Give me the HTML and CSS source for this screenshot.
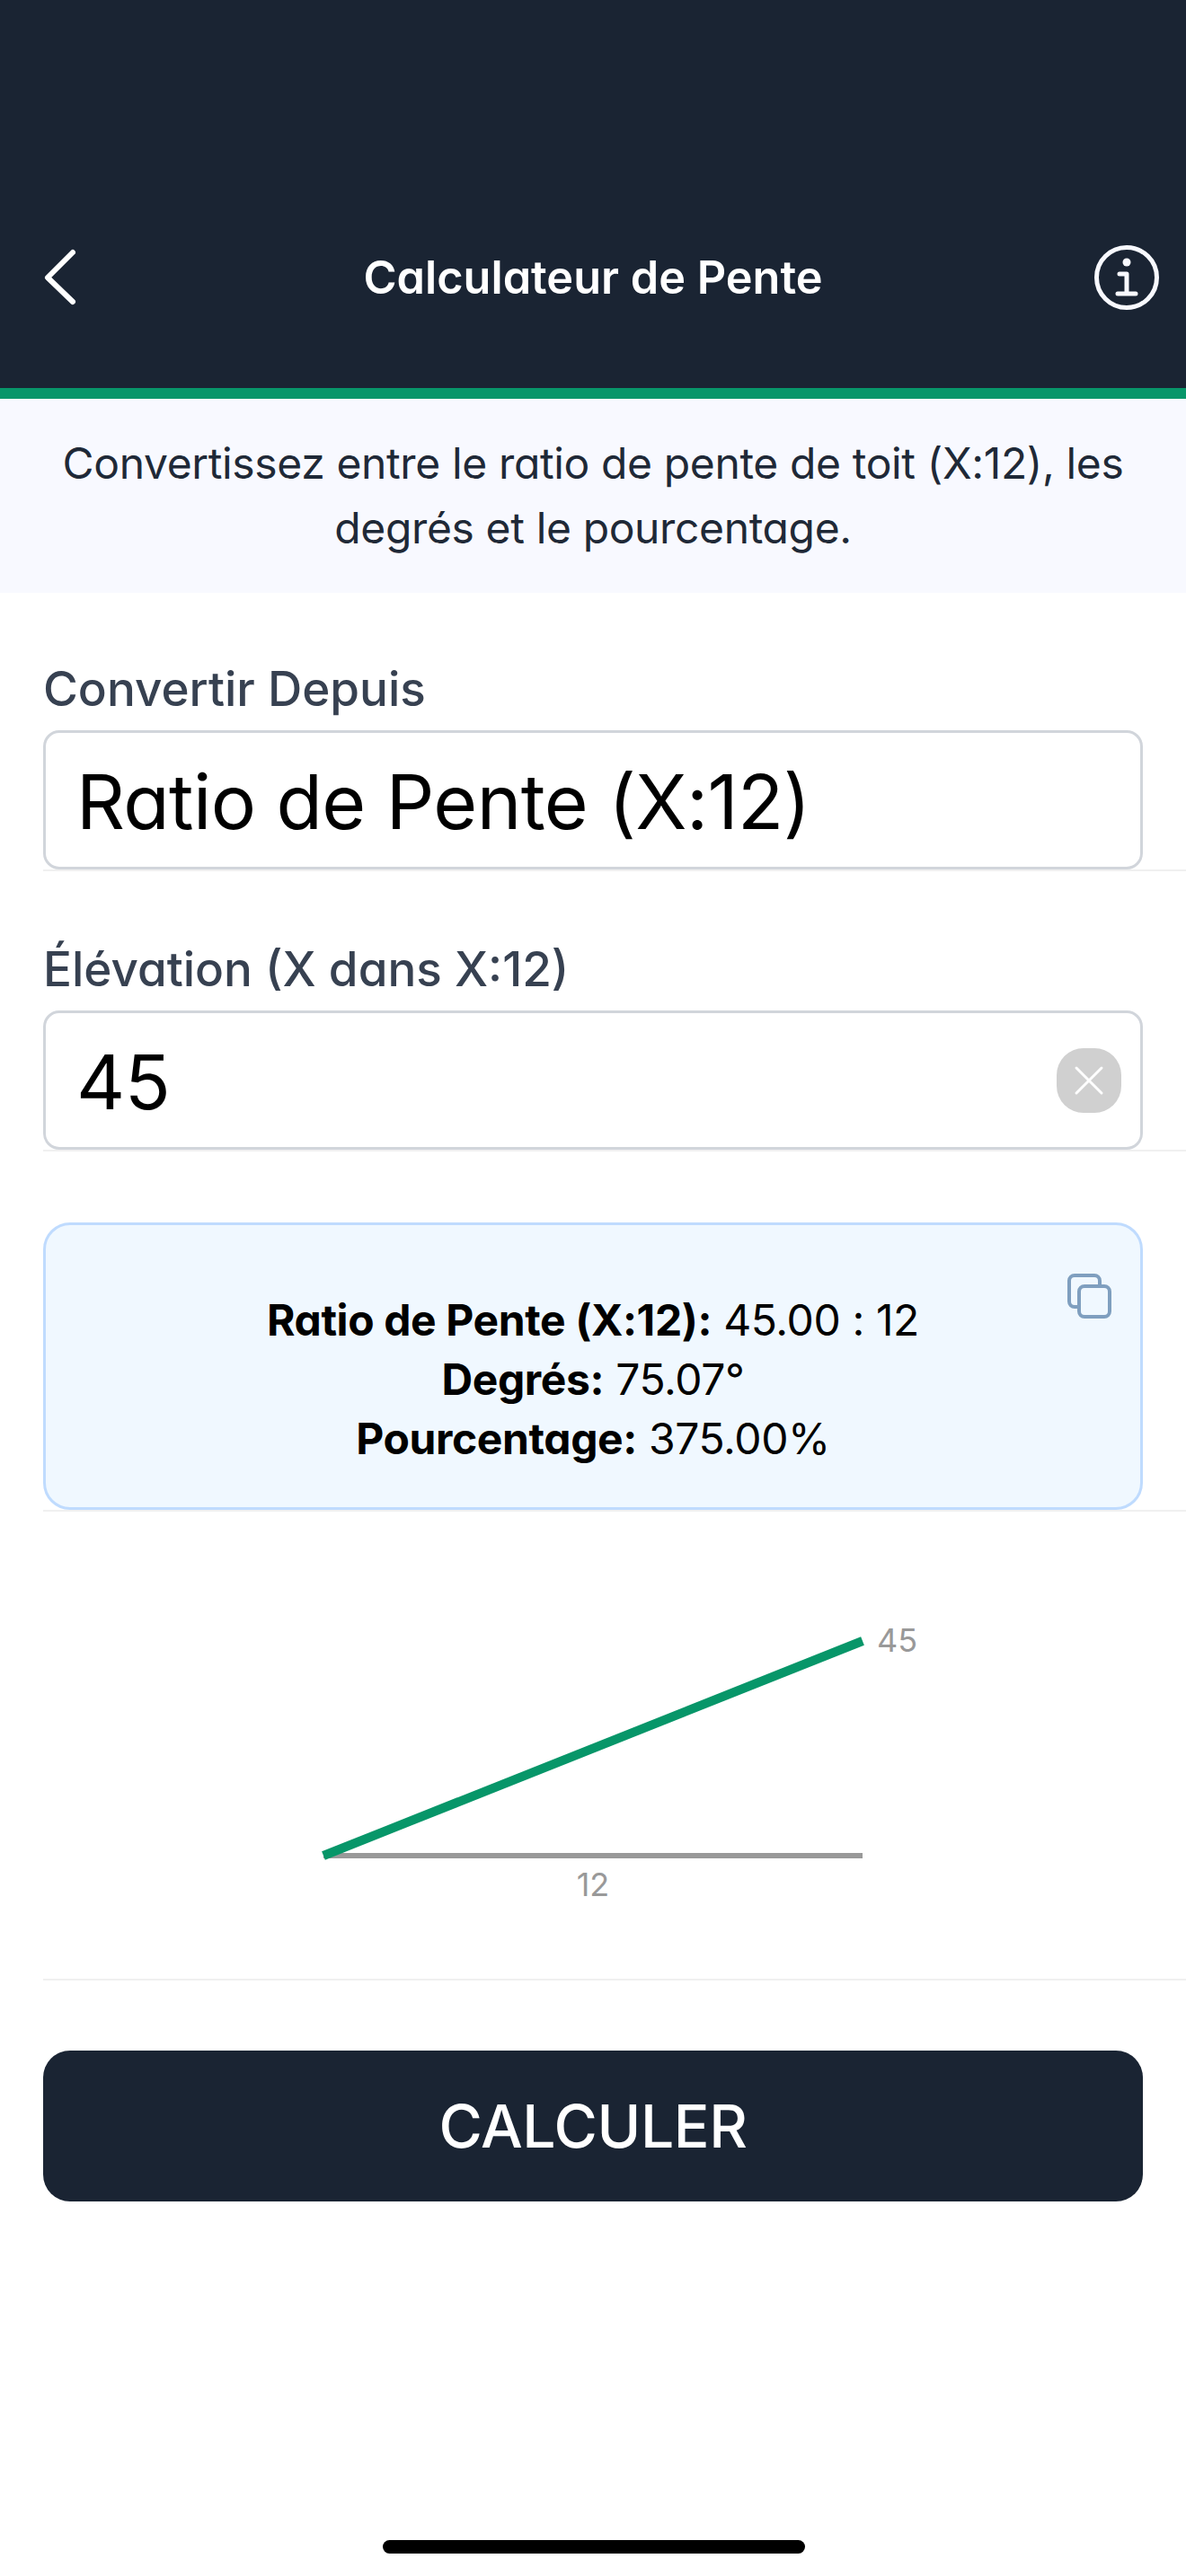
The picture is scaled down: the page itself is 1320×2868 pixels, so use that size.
FILE: index.html
```html
<!DOCTYPE html>
<html lang="fr">
<head>
<meta charset="utf-8">
<title>Calculateur de Pente</title>
<link rel="stylesheet" href="styles.css">
</head>
<body>
<div class="screen">
  <header class="header">
    <svg class="icon-back" viewBox="0 0 48 72" width="48" height="72"><path d="M38 8 L10 36 L38 63" fill="none" stroke="#fff" stroke-width="6" stroke-linecap="round" stroke-linejoin="round"/></svg>
    <h1 class="title">Calculateur de Pente</h1>
    <svg class="icon-info" viewBox="0 0 72 72" width="72" height="72">
      <circle cx="36" cy="36" r="33.5" fill="none" stroke="#f8f9ff" stroke-width="5"/>
      <circle cx="36" cy="19" r="4.5" fill="#f8f9ff"/>
      <path d="M28 32 H36 V54 M26 54 H46" fill="none" stroke="#f8f9ff" stroke-width="5" stroke-linecap="round" stroke-linejoin="round"/>
    </svg>
  </header>
  <p class="intro">Convertissez entre le ratio de pente de toit (X:12), les degrés et le pourcentage.</p>
  <section class="field field-first">
    <div class="label">Convertir Depuis</div>
    <div class="input"><span class="value">Ratio de Pente (X:12)</span></div>
  </section>
  <section class="field">
    <div class="label">Élévation (X dans X:12)</div>
    <div class="input">
      <span class="value">45</span>
      <span class="clear"><svg viewBox="0 0 36 36" width="36" height="36"><path d="M4 4 L32 32 M32 4 L4 32" stroke="#fff" stroke-width="3" stroke-linecap="round"/></svg></span>
    </div>
  </section>
  <section class="field field-result">
    <div class="result">
      <svg class="copy" viewBox="0 0 50 50" width="50" height="50">
        <path d="M12 37 H9 A6 6 0 0 1 3 31 V8 A6 6 0 0 1 9 2 H31 A6 6 0 0 1 37 8 V13" fill="none" stroke="#7f9fbf" stroke-width="4"/>
        <rect x="14" y="14" width="34" height="34" rx="6" fill="none" stroke="#7f9fbf" stroke-width="4"/>
      </svg>
      <div><b>Ratio de Pente (X:12):</b> 45.00 : 12</div>
      <div><b>Degrés:</b> 75.07°</div>
      <div><b>Pourcentage:</b> 375.00%</div>
    </div>
  </section>
  <section class="field field-chart">
    <svg class="chart-svg" viewBox="0 0 1272 340" width="1272" height="340">
      <line x1="312" y1="277" x2="912" y2="277" stroke="#999" stroke-width="6"/>
      <line x1="312" y1="277" x2="912" y2="38" stroke="#079669" stroke-width="10"/>
      <text class="chart-label" x="928" y="50">45</text>
      <text class="chart-label" x="612" y="322" text-anchor="middle">12</text>
    </svg>
  </section>
  <button class="calc">CALCULER</button>
  <div class="home"></div>
</div>
</body>
</html>
```
FILE: styles.css
```css
* { box-sizing: border-box; }
html, body { margin: 0; padding: 0; background: #fff; }
body { font-family: Inter, "Liberation Sans", sans-serif; font-feature-settings: "cv11" 1; }
.screen { width: 1320px; height: 2868px; position: relative; display: flex; flex-direction: column; }
.header { height: 444px; background: #1a2433; border-bottom: 12px solid #079669; padding: 233px 30px 47px; display: grid; grid-template-columns: 1fr auto 1fr; align-items: center; }
.icon-back { margin-left: 13px; }
.icon-info { justify-self: end; }
.title { margin: 0; font-size: 50.4px; line-height: 64px; font-weight: 600; color: #fff; }
.intro { margin: 0; height: 216px; padding: 36px 48px; background: #f8f9ff; font-size: 48px; letter-spacing: -0.37px; line-height: 72px; color: #1f2937; text-align: center; }
.field { margin-left: 48px; padding-right: 48px; border-bottom: 2px solid #f0f0f0; }
.field-first { margin-top: 77px; }
.field + .field { margin-top: 79px; }
.label { font-size: 53px; line-height: 60px; font-weight: 500; color: #374151; margin-bottom: 16px; }
.input { height: 155px; border: 3px solid #d1d5db; border-radius: 18px; padding: 0 21px 0 34px; display: flex; align-items: center; justify-content: space-between; }
.value { font-size: 84px; letter-spacing: -0.6px; padding-top: 3px; color: #000; }
.clear { width: 72px; height: 72px; border-radius: 30px; background: #d0d0d0; display: flex; align-items: center; justify-content: center; }
.result { position: relative; height: 320px; background: #f0f8ff; border: 3px solid #bfdbfe; border-radius: 30px; font-size: 48px; letter-spacing: -0.39px; line-height: 66px; color: #000; text-align: center; padding-top: 73px; }
.result b { font-weight: 700; }
.copy { position: absolute; top: 54px; right: 32px; }
.field + .field.field-chart { margin-top: 0; height: 522px; }
.chart-svg { display: block; margin-top: 106px; }
.chart-label { font-size: 36px; fill: #999; font-family: Inter, sans-serif; }
.calc { margin: 78px 48px 0; height: 168px; background: #1a2433; color: #fff; border: 0; border-radius: 30px; font-family: inherit; font-size: 66px; letter-spacing: -0.4px; font-weight: 500; }
.home { position: absolute; left: 426px; bottom: 25px; width: 470px; height: 15px; border-radius: 8px; background: #000; }
```
